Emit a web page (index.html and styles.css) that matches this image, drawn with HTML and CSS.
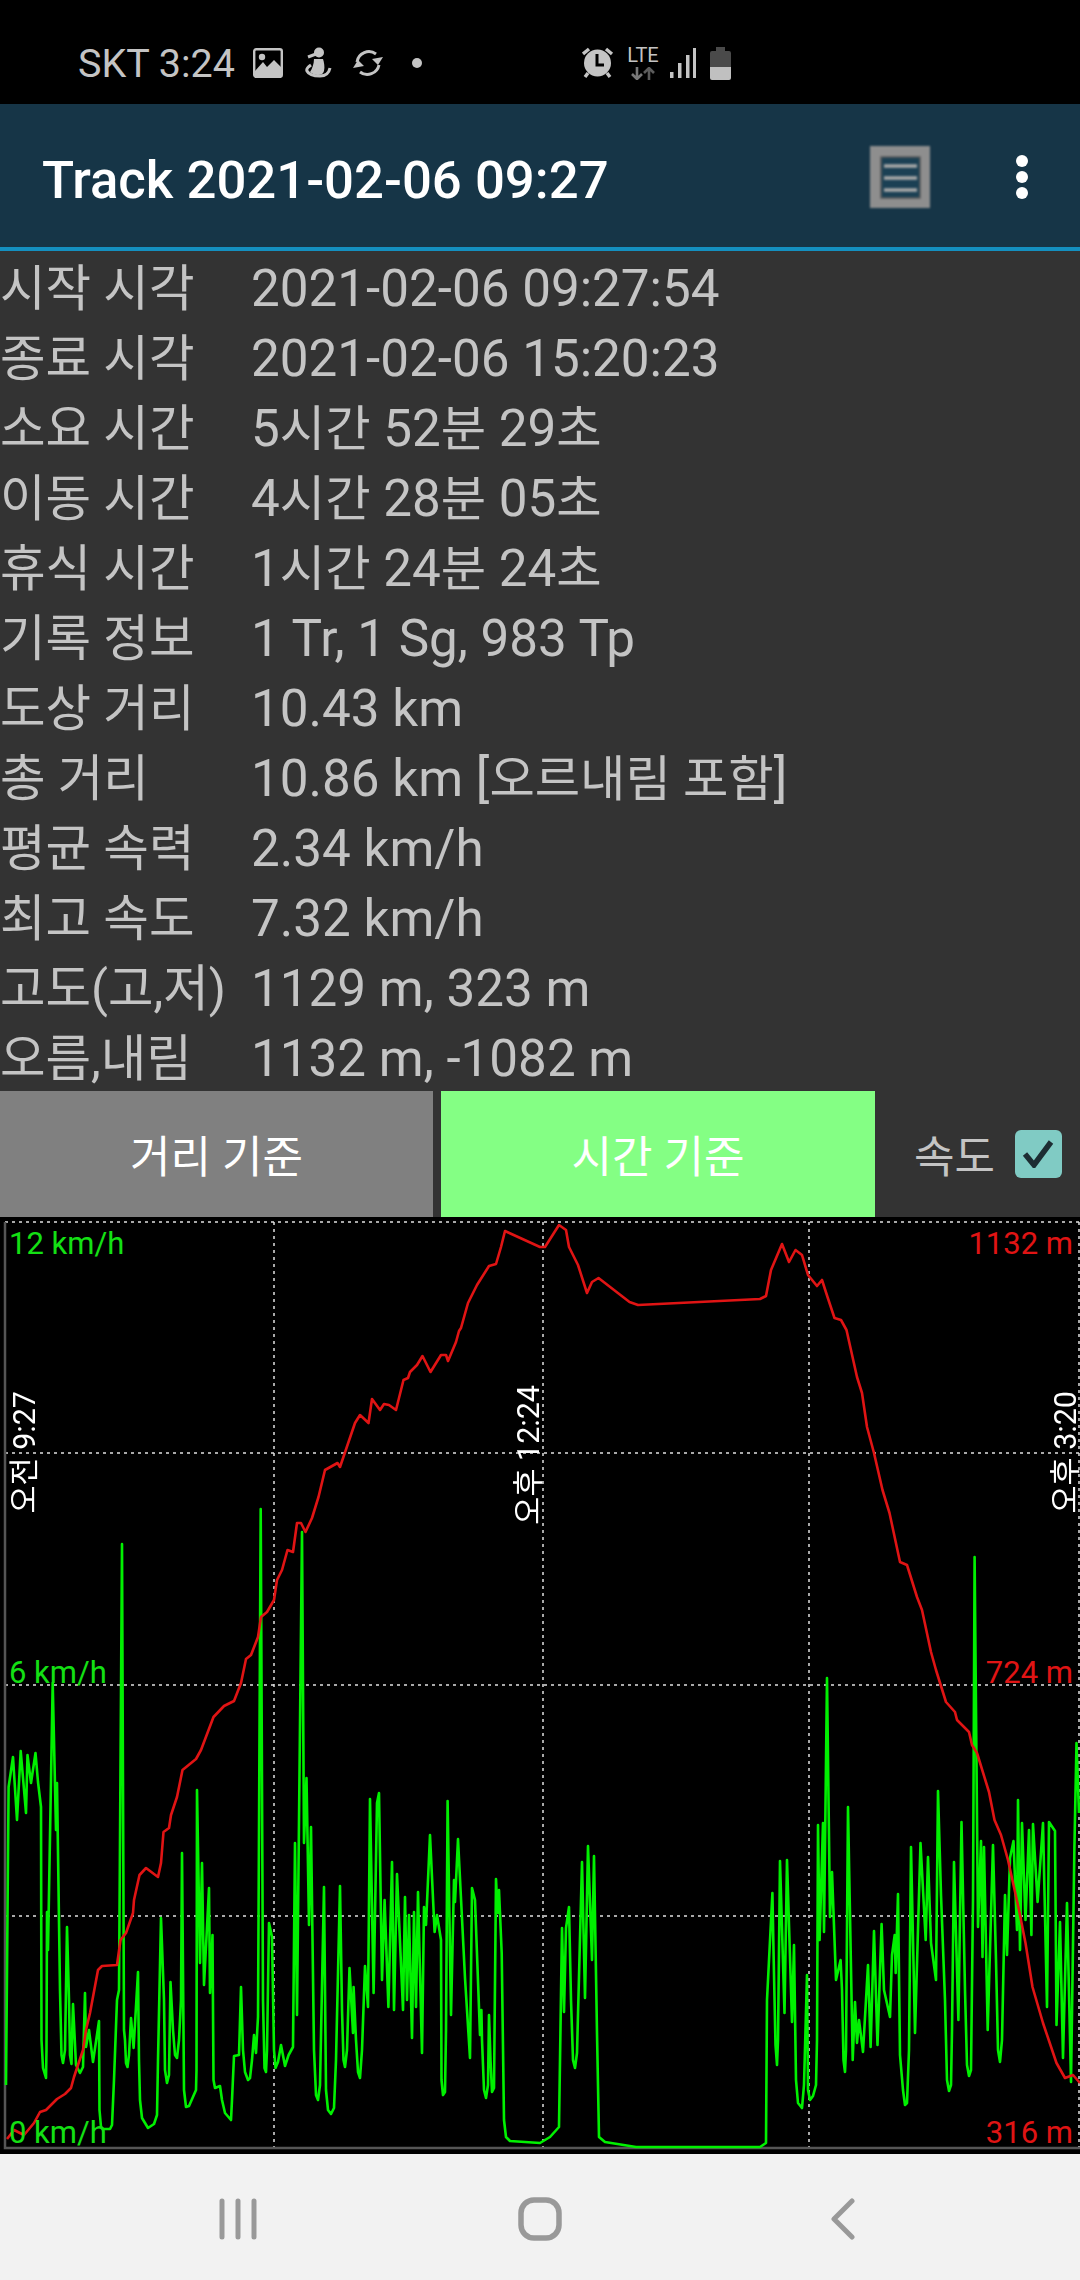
FILE: index.html
```html
<!DOCTYPE html>
<html lang="ko">
<head>
    <meta charset="UTF-8">
    <meta name="viewport" content="width=device-width, initial-scale=1.0">
    <title>Track 2021-02-06 09:27</title>
    <link rel="stylesheet" href="styles.css">
</head>
<body>
    <div class="status-bar">
        <span class="status-text">SKT 3:24</span>
        <svg class="st-image" width="30" height="30" viewBox="0 0 30 30"><rect x="1.2" y="1.2" width="27.6" height="27.6" rx="2" fill="none" stroke="#c4c4c4" stroke-width="2.4"/><circle cx="9" cy="9" r="3.2" fill="#c4c4c4"/><path fill="#c4c4c4" d="M2 23l8-9 4 5 7-7 7 7v11H2z"/></svg>
        <svg class="st-figure" width="27" height="32" viewBox="0 0 27 32"><circle cx="14" cy="5.5" r="5" fill="#c4c4c4"/><path d="M3 10l8-3" fill="none" stroke="#c4c4c4" stroke-width="3"/><path fill="#c4c4c4" d="M9 12h9c1 3 2 8 1 12-1 3-3 4-6 4s-6-1-8-3c2-3 4-8 4-13z"/><path d="M6 18c-3 2-5 4-4 6 2 4 8 5 13 5 6 0 9-3 10-8" fill="none" stroke="#c4c4c4" stroke-width="3"/></svg>
        <svg class="st-sync" width="32" height="30" viewBox="0 0 32 30"><g fill="none" stroke="#c4c4c4" stroke-width="3"><path d="M5 14A12 12 0 0 1 24 6"/><path d="M27 17A12 12 0 0 1 8 24"/></g><path fill="#c4c4c4" d="M31 9l-11 2 6 6zM1 20l11-2-6-6z"/></svg>
        <span class="st-dot"></span>
        <svg class="st-alarm" width="32" height="32" viewBox="0 0 32 32"><circle cx="15.5" cy="16" r="13.5" fill="#c4c4c4"/><path d="M15 7v11h7" fill="none" stroke="#000" stroke-width="3"/><path d="M1 7l6-5M30 7l-6-5M6 26l-3 4M25 26l3 4" fill="none" stroke="#c4c4c4" stroke-width="3.4"/></svg>
        <span class="st-lte">
            <span class="st-lte-text">LTE</span>
            <svg width="26" height="13" viewBox="0 0 26 13"><path d="M7 0v11M2 7l5 5 5-5" fill="none" stroke="#777" stroke-width="2.6"/><path d="M19 13V2M14 6l5-5 5 5" fill="none" stroke="#5c5c5c" stroke-width="2.6"/></svg>
        </span>
        <svg class="st-signal" width="28" height="30" viewBox="0 0 28 30"><path fill="#c4c4c4" d="M2 24h3.5v6H2zM10 15h3.5v15H10z"/><path fill="#c4c4c4" d="M18 7h3.5v23H18zM25 0h3v30h-3z"/></svg>
        <svg class="st-battery" width="21" height="33" viewBox="0 0 21 33"><path fill="#4a4a4a" d="M6 0h9v4h4a2 2 0 0 1 2 2v14H0V6a2 2 0 0 1 2-2h4z"/><path fill="#c0c0c0" d="M0 20h21v11a2 2 0 0 1-2 2H2a2 2 0 0 1-2-2z"/></svg>
    </div>

    <div class="toolbar">
        <h1 class="toolbar-title">Track 2021-02-06 09:27</h1>
        <svg class="toolbar-list" width="62" height="64" viewBox="0 0 62 64"><rect x="1" y="1" width="60" height="62" fill="#8e8e8e"/><rect x="12" y="12" width="39" height="41" fill="#1b4054" stroke="#5a5a5a" stroke-width="1.5"/><path d="M15 21h33M15 33h33M15 45h33" stroke="#a8a8a8" stroke-width="3.5"/></svg>
        <div class="toolbar-more"><span></span><span></span><span></span></div>
    </div>

    <div class="info">
        <div class="info-row"><span class="info-label">시작 시각</span><span class="info-value">2021-02-06 09:27:54</span></div>
        <div class="info-row"><span class="info-label">종료 시각</span><span class="info-value">2021-02-06 15:20:23</span></div>
        <div class="info-row"><span class="info-label">소요 시간</span><span class="info-value">5<span class="ko">시간</span> 52<span class="ko">분</span> 29<span class="ko">초</span></span></div>
        <div class="info-row"><span class="info-label">이동 시간</span><span class="info-value">4<span class="ko">시간</span> 28<span class="ko">분</span> 05<span class="ko">초</span></span></div>
        <div class="info-row"><span class="info-label">휴식 시간</span><span class="info-value">1<span class="ko">시간</span> 24<span class="ko">분</span> 24<span class="ko">초</span></span></div>
        <div class="info-row"><span class="info-label">기록 정보</span><span class="info-value">1 Tr, 1 Sg, 983 Tp</span></div>
        <div class="info-row"><span class="info-label">도상 거리</span><span class="info-value">10.43 km</span></div>
        <div class="info-row"><span class="info-label">총 거리</span><span class="info-value">10.86 km [<span class="ko">오르내림 포함</span>]</span></div>
        <div class="info-row"><span class="info-label">평균 속력</span><span class="info-value">2.34 km/h</span></div>
        <div class="info-row"><span class="info-label">최고 속도</span><span class="info-value">7.32 km/h</span></div>
        <div class="info-row"><span class="info-label">고도(고,저)</span><span class="info-value">1129 m, 323 m</span></div>
        <div class="info-row"><span class="info-label">오름,내림</span><span class="info-value">1132 m, -1082 m</span></div>
    </div>

    <div class="controls">
        <div class="mode-btn mode-off">거리 기준</div>
        <div class="mode-btn mode-on">시간 기준</div>
        <div class="speed-toggle">
            <span class="speed-label">속도</span>
            <span class="speed-check"><svg width="34" height="28" viewBox="0 0 34 28"><path d="M4 14l9 11L30 2" fill="none" stroke="#1d2d33" stroke-width="5.5"/></svg></span>
        </div>
    </div>

    <div class="chart">
        <svg class="chart-lines" width="1080" height="937" viewBox="0 1217 1080 937">
            <path class="grid" d="M5 1222H1080M5 1453H1080M5 1685H1080M5 1916H1080M274 1222V2148M543 1222V2148M809 1222V2148M1079 1222V2148"/>
            <path class="axis" d="M5 1222V2148H1080"/>
            <polyline class="speed-line" points="6,2085 8.6,1787 13,1757 17,1820 20.7,1751 26,1813 27.5,1755 31,1783 35.5,1753 38,1782 41,1807 41.5,2040 43,2068 46,2078 46.5,2050 47,1912 48,1950 52.7,1683 56,1830 57,1783 60,1990 61.5,2055 63,2063 65,2050 67,1927 69,2000 70,2055 71.5,2064 72,2040 73,2004 76,2065 80,2073 83,2067 85,1993 86,2047 89,2030 93,2062 99,2021 99.5,2110 101,2127 103,2129 110,2129 112,2125 114,2080 117,2000 119,1990 122,1544 124,2030 125,2040 126,2063 127.5,2067 129,2055 131,2018 133.6,2048 138,1972 139,2060 140,2100 142,2118 148,2128 154,2124 157,2115 158,2060 161,1918 164,2000 165,2070 167,2083 169,2075 170.5,1982 173,2030 175,2055 177,2058 179,2040 181,2000 182,1853 184,2090 186,2107 189,2106 196,2090 196.5,2070 197,1790 200,1963 202,1863 204,1985 206.6,1935 209,1888 210,1993 212.5,1935 213.5,2080 215,2088 220,2086 222,2100 225,2113 231,2120 232,2100 234,2056 239,2055 241,1987 243,2050 245,2072 248,2080 250,2078 252,2060 254,2035 256,2053 258,2017 260.7,1509 263,2000 264.5,2068 266,2072 267,2050 269,1923 272,1937 274,2050 275.5,2068 278,2062 281,2045 285,2066 288.6,2055 293,2047 295,1843 297,2015 302,1532 304,1843 306.5,1778 309,1925 311,1827 314,2050 316,2095 318,2100 320,2085 324,1887 326,2090 328,2110 331,2114 334,2108 336,2060 340,1886 342,2010 343.5,2060 345,2067 347,2050 349.5,1968 353,2033 353.6,1987 356,2040 358,2072 360,2078 362,2050 365,1966 368,2007 370,1799 373.6,1993 377,1803 379,1793 382,1980 384.6,1900 388.4,2007 392,1862 394,2010 397,1874 403,2010 405,1897 407,2000 409,1915 412,2038 414,1912 416,2007 418,1892 422,2053 424,1907 426,1925 430,1835 434.6,1932 437,1915 441,1940 441.5,2080 443,2095 445,2092 446,2030 447.6,1801 451,2015 454,1880 455,1902 458,1839 465,1978 470,2058 472,1888 475,1900 480,2035 481.4,2010 482,2040 484,2090 486,2098 488,2085 489,2015 490.5,2060 492,2092 494,2088 496,1879 497.6,1913 499,1890 501.7,1953 504,2120 506,2137 510,2141 540,2143 550,2137 559,2127 562,1928 564,2012 566,1928 569,1907 571,2000 573,2060 575,2068 577,2053 582,1862 585,1998 588,1846 592,1960 594,1856 597,2033 599,2137 605,2142 636,2147 760,2147 766,2143 767,2000 772.4,1893 773.5,1950 775.5,2045 777,2065 778,2040 780,1861 784.5,2013 787,1860 792,2022 794,1945 796,2080 798,2103 802,2108 804,2085 807,1975 808,2090 810,2100 813,2096 816,2085 817,2040 818,1825 819.6,1940 823,1823 824,1932 827,1678 830,1917 832,1872 836,1980 840.6,1960 842,1990 843.5,2060 845,2072 846,2050 848,1807 852.7,2060 855,2002 857,2043 859,2020 863,2052 868,1965 870.6,2047 874,1931 877.5,2045 881.6,1924 884,1990 890,2017 892,1955 894.7,1935 895.7,1973 898,1894 900,2055 903,2090 905,2105 907,2103 909,2050 911,1847 915,2033 920.5,1843 925.7,1940 928,1857 931,1943 936,1980 938,1791 941,1895 945,2000 947,2080 949,2091 951,2085 952,2030 954,1862 958.4,2020 961.5,1822 965,1990 967,2065 969,2076 971,2070 973,1900 974.6,1557 978,1927 981,1841 982.5,1957 984,1847 987.7,2030 993,1845 996,1960 998,2050 1000,2062 1002,2040 1005,1895 1007,1955 1010,1858 1013.5,1841 1017,1930 1018,1800 1020,1950 1022,1823 1025.5,1920 1029,1830 1031.4,1935 1033,1824 1037.6,1902 1043,1823 1047,2007 1049,1822 1055,1831 1056.5,2025 1060,1922 1063,2058 1067,1903 1071,2082 1074.4,1848 1076.5,1743 1079,1813"/>
            <polyline class="alt-line" points="7,2139 14,2130 24,2135 34,2123 40,2112 46,2110 57,2099 65,2094 71,2088 74,2077 83,2050 86,2030 90,2013 98,1970 102,1966 117,1965 120.5,1940 126,1933 133,1913 134,1900 139.5,1875 146,1868 158,1877 161,1863 163.5,1832 169,1828 171,1815 177,1797 182.5,1770 196,1759 201,1750 213.5,1717 224,1706 234,1701 241,1683 246,1659 251,1655 258,1637 261,1617 267,1612 274,1600 277,1580 282,1570 287.5,1550 293,1552 297,1523 301,1523 305.5,1532 312,1518 318.5,1497 325,1470 337.5,1463 340,1467 355,1423 360,1415 368.5,1423 372,1399 380,1410 384,1404 389,1405 396,1410 403.5,1380 408,1378 410,1372 417,1365 422.5,1356 430.5,1372 441,1355 446,1355 448,1361 456,1342 459,1331 461,1328 468,1303 477,1285 489,1266 496,1264 501,1247 505,1231 540,1247 545,1247 559,1225 566,1230 569,1247 578,1265 587,1293 592,1282 598.5,1278 629.5,1302 638,1305 760,1299 766,1296 771,1270 782,1244 789,1262 795.5,1250 802,1255 808,1275 817,1286 822,1280 827.5,1297 834.5,1318 841,1320 846.5,1330 857,1377 862,1393 867,1427 874,1453 882.5,1490 889.5,1513 900,1562 907,1565 917,1597 922,1610 931,1652 936,1670 946,1702 955,1712 957,1720 969,1732 972,1745 977,1753 989,1792 994.5,1820 1001,1835 1008,1860 1019,1910 1025.5,1943 1032.5,1987 1043,2023 1056.5,2063 1065,2078 1073,2075 1080,2083"/>
        </svg>
        <span class="axis-label speed-top">12 km/h</span>
        <span class="axis-label speed-mid">6 km/h</span>
        <span class="axis-label speed-low">0 km/h</span>
        <span class="axis-label alt-top">1132 m</span>
        <span class="axis-label alt-mid">724 m</span>
        <span class="axis-label alt-low">316 m</span>
        <span class="time-label time-start">오전 9:27</span>
        <span class="time-label time-mid">오후 12:24</span>
        <span class="time-label time-end">오후 3:20</span>
    </div>

    <div class="nav-bar">
        <svg class="nav-recent" width="40" height="42" viewBox="0 0 40 42"><path d="M4 3v36M20 3v36M36 3v36" fill="none" stroke="#999" stroke-width="5" stroke-linecap="round"/></svg>
        <svg class="nav-home" width="44" height="44" viewBox="0 0 44 44"><rect x="3" y="3" width="38" height="38" rx="13" fill="none" stroke="#999" stroke-width="5.5"/></svg>
        <svg class="nav-back" width="24" height="42" viewBox="0 0 24 42"><path d="M21 3L3 21l18 18" fill="none" stroke="#999" stroke-width="5" stroke-linecap="round" stroke-linejoin="round"/></svg>
    </div>
</body>
</html>
```

FILE: styles.css
```css
* {
    box-sizing: border-box;
}
body {
    margin: 0;
    width: 1080px;
    height: 2280px;
    overflow: hidden;
    font-family: Roboto, "Noto Sans CJK KR", sans-serif;
    background-color: #333333;
}

/* Status bar */
.status-bar {
    display: flex;
    align-items: center;
    height: 104px;
    padding: 22px 0 0 78px;
    background-color: #000;
    color: #c4c4c4;
}
.status-text {
    font-size: 39.5px;
    width: 175px;
    white-space: nowrap;
}
.st-figure {
    margin-left: 22px;
}
.st-sync {
    margin-left: 20px;
}
.st-dot {
    width: 10px;
    height: 10px;
    margin-left: 28px;
    border-radius: 50%;
    background-color: #c4c4c4;
}
.st-alarm {
    margin-left: 160px;
}
.st-lte {
    display: flex;
    flex-direction: column;
    align-items: center;
    width: 30px;
    margin-left: 14px;
    gap: 3px;
}
.st-lte-text {
    font-size: 20px;
    line-height: 17px;
}
.st-signal {
    margin-left: 10px;
}
.st-battery {
    margin-left: 14px;
}

/* Toolbar */
.toolbar {
    display: flex;
    align-items: center;
    height: 147px;
    padding: 2px 0 0 42px;
    background-color: #163547;
    border-bottom: 4px solid #1490c0;
}
.toolbar-title {
    flex: 1;
    margin: 0;
    padding-top: 6px;
    font-size: 52.7px;
    font-weight: 500;
    color: #fff;
}
.toolbar-list {
    margin-right: 85px;
    filter: blur(1px);
}
.toolbar-more {
    display: flex;
    flex-direction: column;
    gap: 4px;
    margin-right: 52px;
}
.toolbar-more span {
    width: 12px;
    height: 12px;
    border-radius: 50%;
    background-color: #fff;
}

/* Track info */
.info {
    display: flex;
    flex-direction: column;
    height: 840px;
    color: #c4c4c4;
}
.info-row {
    display: grid;
    grid-template-columns: 251px 1fr;
    align-items: center;
    height: 70px;
    padding-top: 6px;
    white-space: nowrap;
}
.info-label {
    font-size: 49.5px;
    line-height: 60px;
}
.info-value {
    font-size: 51.2px;
    line-height: 60px;
}
.ko {
    font-size: 49.3px;
}

/* Mode buttons */
.controls {
    display: flex;
    height: 126px;
    gap: 8px;
}
.mode-btn {
    display: flex;
    align-items: center;
    justify-content: center;
    width: 433px;
    font-size: 44px;
    color: #fff;
}
.mode-off {
    background-color: #808080;
}
.mode-on {
    width: 434px;
    background-color: #84ff84;
}
.speed-toggle {
    display: flex;
    align-items: center;
    margin-left: 31px;
    gap: 20px;
    color: #c4c4c4;
    font-size: 44px;
}
.speed-check {
    display: flex;
    align-items: center;
    justify-content: center;
    width: 47px;
    height: 48px;
    border-radius: 6px;
    background-color: #80cbc4;
}

/* Chart */
.chart {
    position: relative;
    height: 937px;
    background-color: #000;
}
.chart-lines {
    display: block;
}
.grid {
    fill: none;
    stroke: #e0e0e0;
    stroke-width: 1.5;
    stroke-dasharray: 3 4;
}
.axis {
    fill: none;
    stroke: #555;
    stroke-width: 2.5;
}
.speed-line {
    fill: none;
    stroke: #00f000;
    stroke-width: 2.6;
    stroke-linejoin: round;
    filter: blur(0.4px);
}
.alt-line {
    fill: none;
    stroke: #e01414;
    stroke-width: 2.6;
    stroke-linejoin: round;
    filter: blur(0.4px);
}
.axis-label {
    position: absolute;
    font-size: 31px;
    line-height: 36px;
    white-space: nowrap;
}
.speed-top, .speed-mid, .speed-low {
    left: 9px;
    color: #14e014;
}
.alt-top, .alt-mid, .alt-low {
    right: 7px;
    color: #e01414;
}
.speed-top, .alt-top {
    top: 9px;
}
.speed-mid, .alt-mid {
    top: 438px;
}
.speed-low, .alt-low {
    top: 898px;
}
.time-label {
    position: absolute;
    writing-mode: vertical-rl;
    text-orientation: sideways;
    transform: rotate(180deg);
    font-size: 30.5px;
    line-height: 36px;
    color: #fff;
    white-space: nowrap;
}
.time-start {
    left: 7px;
    top: 174px;
}
.time-mid {
    left: 511px;
    top: 168px;
}
.time-end {
    left: 1048px;
    top: 174px;
}

/* Navigation bar */
.nav-bar {
    display: flex;
    align-items: center;
    height: 126px;
    padding: 3px 0 0 218px;
    background-color: #f2f2f2;
}
.nav-home {
    margin-left: 260px;
}
.nav-back {
    margin-left: 269px;
}
```
